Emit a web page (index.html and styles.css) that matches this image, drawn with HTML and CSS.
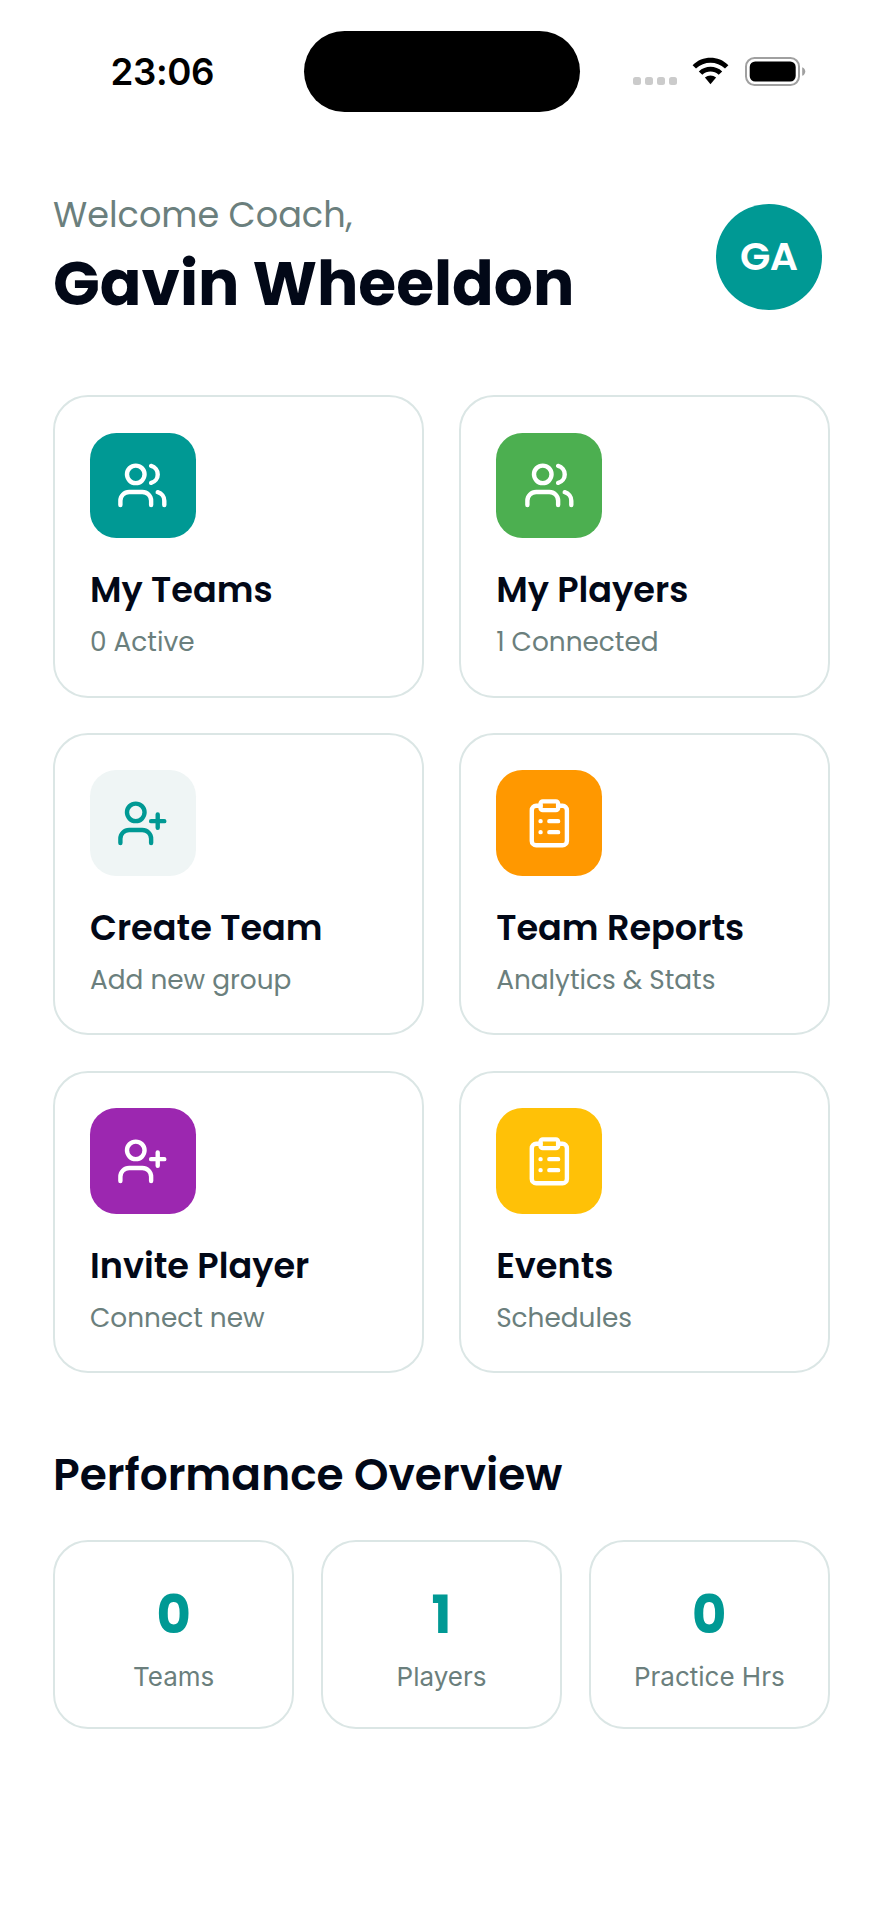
FILE: index.html
```
<!DOCTYPE html>
<html lang="en">

<head>
    <meta charset="UTF-8">
    <meta name="viewport" content="width=device-width, initial-scale=1.0">
    <title>Coach Dashboard</title>
    <link rel="stylesheet" href="styles.css">
</head>

<body>
    <!-- phone status bar -->
    <div class="statusBar">
        <span class="time">23:06</span>
        <div class="island"></div>
        <div class="statusIcons">
            <div class="signal"><i></i><i></i><i></i><i></i></div>
            <svg class="wifi" viewBox="0 0 37 28">
                <path d="M0.6 8.2C10.6-1.6 26.4-1.6 36.4 8.2L33 11.6C24.8 3.9 12.2 3.9 4 11.6Z" />
                <path d="M6.8 14.4C13.4 8.2 23.6 8.2 30.2 14.4L26.7 17.8C22 13.5 15 13.5 10.3 17.8Z" />
                <path d="M12.9 20.6C16.2 17.8 20.8 17.8 24.1 20.6L18.5 27.2Z" />
            </svg>
            <svg class="battery" viewBox="0 0 61 29">
                <rect class="shell" x="1" y="1" width="53" height="27" rx="8.5" />
                <rect x="4.7" y="4.5" width="46" height="20" rx="5.5" />
                <path class="nub" d="M57.2 10.2C61.3 11.4 61.3 17.6 57.2 18.8Z" />
            </svg>
        </div>
    </div>

    <main>
        <header>
            <div>
                <p class="welcome">Welcome Coach,</p>
                <h1>Gavin Wheeldon</h1>
            </div>
            <div class="avatar">GA</div>
        </header>

        <section class="menu">
            <div class="card">
                <div class="tile teal">
                    <svg viewBox="0 0 24 24">
                        <path d="M16 21v-2a4 4 0 0 0-4-4H6a4 4 0 0 0-4 4v2M22 21v-2a4 4 0 0 0-3-3.87M16 3.13a4 4 0 0 1 0 7.75" />
                        <circle cx="9" cy="7" r="4" />
                    </svg>
                </div>
                <h2>My Teams</h2>
                <p>0 Active</p>
            </div>
            <div class="card">
                <div class="tile green">
                    <svg viewBox="0 0 24 24">
                        <path d="M16 21v-2a4 4 0 0 0-4-4H6a4 4 0 0 0-4 4v2M22 21v-2a4 4 0 0 0-3-3.87M16 3.13a4 4 0 0 1 0 7.75" />
                        <circle cx="9" cy="7" r="4" />
                    </svg>
                </div>
                <h2>My Players</h2>
                <p>1 Connected</p>
            </div>
            <div class="card">
                <div class="tile pale">
                    <svg viewBox="0 0 24 24">
                        <path d="M16 21v-2a4 4 0 0 0-4-4H6a4 4 0 0 0-4 4v2M19 8v6M22 11h-6" />
                        <circle cx="9" cy="7" r="4" />
                    </svg>
                </div>
                <h2>Create Team</h2>
                <p>Add new group</p>
            </div>
            <div class="card">
                <div class="tile orange">
                    <svg viewBox="0 0 24 24">
                        <rect x="8" y="2" width="8" height="4" rx="1" />
                        <path d="M16 4h2a2 2 0 0 1 2 2v14a2 2 0 0 1-2 2H6a2 2 0 0 1-2-2V6a2 2 0 0 1 2-2h2M12 11h4M12 16h4M8 11h.01M8 16h.01" />
                    </svg>
                </div>
                <h2>Team Reports</h2>
                <p>Analytics &amp; Stats</p>
            </div>
            <div class="card">
                <div class="tile purple">
                    <svg viewBox="0 0 24 24">
                        <path d="M16 21v-2a4 4 0 0 0-4-4H6a4 4 0 0 0-4 4v2M19 8v6M22 11h-6" />
                        <circle cx="9" cy="7" r="4" />
                    </svg>
                </div>
                <h2>Invite Player</h2>
                <p>Connect new</p>
            </div>
            <div class="card">
                <div class="tile yellow">
                    <svg viewBox="0 0 24 24">
                        <rect x="8" y="2" width="8" height="4" rx="1" />
                        <path d="M16 4h2a2 2 0 0 1 2 2v14a2 2 0 0 1-2 2H6a2 2 0 0 1-2-2V6a2 2 0 0 1 2-2h2M12 11h4M12 16h4M8 11h.01M8 16h.01" />
                    </svg>
                </div>
                <h2>Events</h2>
                <p>Schedules</p>
            </div>
        </section>

        <h3>Performance Overview</h3>
        <section class="stats">
            <div class="stat"><strong>0</strong><span>Teams</span></div>
            <div class="stat"><strong>1</strong><span>Players</span></div>
            <div class="stat"><strong>0</strong><span>Practice Hrs</span></div>
        </section>
    </main>
</body>

</html>
```
FILE: styles.css
```
* {
    box-sizing: border-box;
    margin: 0;
}

body {
    background-color: #fff;
    color: #020817;
    font-family: Poppins, Inter, sans-serif;
}

.statusBar {
    display: grid;
    grid-template-columns: 304px 275.5px 1fr;
    align-items: center;
    height: 142px;
    color: #000;
}

.time {
    padding-left: 110.5px;
    font-family: Inter, sans-serif;
    font-size: 36.7px;
    font-weight: 600;
    letter-spacing: -0.4px;
}

.island {
    height: 81px;
    background-color: #000;
    border-radius: 41px;
}

.statusIcons {
    display: flex;
    align-items: center;
    padding-left: 53px;
}

.signal {
    display: flex;
    gap: 4px;
    margin: 20px 15.5px 0 0;
}

.signal i {
    width: 8px;
    height: 8px;
    background-color: #cbcbcb;
    border-radius: 2.5px;
}

.wifi {
    width: 37px;
    height: 28px;
    margin-right: 16px;
}

.battery {
    width: 61px;
    height: 29px;
}

.shell {
    fill: none;
    stroke: #a0a0a0;
    stroke-width: 2;
}

.nub {
    fill: #a0a0a0;
}

main {
    padding: 48.5px 53px 0;
}

header {
    display: flex;
    justify-content: space-between;
    height: 204.7px;
}

.welcome {
    color: #6b7f7d;
    font-size: 35.1px;
    line-height: 47px;
}

h1 {
    margin-top: 11px;
    font-size: 61.4px;
    font-weight: 700;
    line-height: 70px;
}

.avatar {
    display: flex;
    align-items: center;
    justify-content: center;
    width: 105.5px;
    height: 105.5px;
    margin: 13.5px 8.5px 0 0;
    border-radius: 50%;
    background-color: #009994;
    color: #fff;
    font-size: 39.5px;
    font-weight: 600;
    letter-spacing: -0.5px;
}

.menu {
    display: grid;
    grid-template-columns: 1fr 1fr;
    gap: 35.3px;
}

.card {
    height: 302.5px;
    padding: 35.5px 35px;
    border: 2px solid #dbe6e5;
    border-radius: 35px;
}

.tile {
    display: flex;
    align-items: center;
    justify-content: center;
    width: 105.5px;
    height: 105.5px;
    border-radius: 26.4px;
    color: #fff;
}

.tile svg {
    width: 52.7px;
    height: 52.7px;
    fill: none;
    stroke: currentColor;
    stroke-width: 2;
    stroke-linecap: round;
    stroke-linejoin: round;
}

.teal {
    background-color: #009994;
}

.green {
    background-color: #4caf50;
}

.pale {
    background-color: #eff5f5;
    color: #009994;
}

.orange {
    background-color: #ff9800;
}

.purple {
    background-color: #9c27b0;
}

.yellow {
    background-color: #ffc107;
}

h2 {
    margin-top: 29.8px;
    font-size: 35.1px;
    font-weight: 600;
    line-height: 44px;
}

.card p {
    margin-top: 12px;
    color: #6b7f7d;
    font-size: 26.35px;
    line-height: 36px;
}

h3 {
    margin: 75.5px 0 39.5px;
    font-size: 43.9px;
    font-weight: 600;
    line-height: 52px;
}

.stats {
    display: grid;
    grid-template-columns: repeat(3, 1fr);
    gap: 26.4px;
}

.stat {
    display: flex;
    flex-direction: column;
    align-items: center;
    gap: 14.3px;
    height: 189px;
    padding-top: 42.3px;
    border: 2px solid #dbe6e5;
    border-radius: 35px;
}

.stat strong {
    color: #009994;
    font-size: 52.7px;
    font-weight: 700;
    line-height: 60px;
}

.stat span {
    color: #6b7f7d;
    font-family: Inter, sans-serif;
    font-size: 26px;
    line-height: 36px;
}
```
